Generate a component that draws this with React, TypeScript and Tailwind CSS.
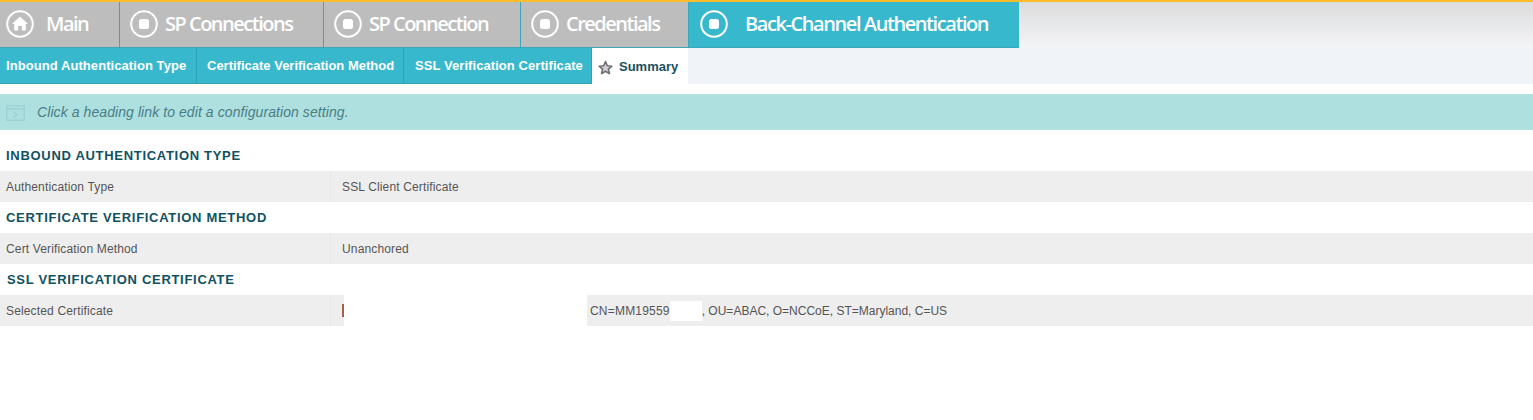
import React from "react";

const mainTabs = [
  { label: "Main", width: "w-[120px]", home: true },
  { label: "SP Connections", width: "w-[204px]" },
  { label: "SP Connection", width: "w-[197px]" },
  { label: "Credentials", width: "w-[168px]" },
];

const subTabs = [
  { label: "Inbound Authentication Type", width: "w-[197px]", pad: "pl-[6px] tracking-[0.07px]" },
  { label: "Certificate Verification Method", width: "w-[207px]", pad: "pl-[10px] tracking-[0px]" },
  { label: "SSL Verification Certificate", width: "w-[188px]", pad: "pl-[11px] tracking-[0.07px]" },
];

const TabIcon = ({ home }: { home?: boolean }) => (
  <svg width="30" height="30" viewBox="0 0 30 30" className="shrink-0">
    <circle cx="15" cy="15" r="12.8" fill="none" stroke="white" strokeWidth="2" />
    {home ? (
      <path d="M15 7.5 L23 15 H20.8 V21.5 H16.8 V17 H13.2 V21.5 H9.2 V15 H7 Z" fill="white" />
    ) : (
      <rect x="10" y="10" width="10" height="10" rx="2.5" fill="white" />
    )}
  </svg>
);

const Heading = ({ children, className }: { children: React.ReactNode; className?: string }) => (
  <div className={`h-[31px] flex items-center text-[13px] font-bold tracking-[0.7px] text-[#0f5163] uppercase ${className ?? "pl-[6px]"}`}>
    {children}
  </div>
);

const Row = ({ label, value }: { label: string; value: string }) => (
  <div className="h-[31px] flex bg-[#eeeeee] text-[12px] tracking-[0.15px] text-[#555555]">
    <div className="w-[331px] pl-[6px] flex items-center border-r border-[#e6e6e6]">{label}</div>
    <div className="pl-[11px] flex items-center">{value}</div>
  </div>
);

export default function App() {
  return (
    <div className="w-[1533px] h-[420px] bg-white overflow-hidden font-['Liberation_Sans',Arial,sans-serif]">
      <div className="h-[2px] bg-[#fdbc2c]" />

      <div className="h-[46px] flex bg-gradient-to-b from-[#dcdcdc] to-[#f4f5f8]">
        {mainTabs.map((tab) => (
          <div
            key={tab.label}
            className={`${tab.width} h-full flex items-center bg-[#bdbdbd] border-r border-b border-[#3ba6b8] pb-[2px] font-['Open_Sans',sans-serif] text-[20px] font-semibold tracking-[-1.5px] text-white ${tab.home ? "pl-[5px]" : "pl-[9px]"}`}
          >
            <TabIcon home={tab.home} />
            <span className={tab.home ? "ml-[11px]" : "ml-[6px]"}>{tab.label}</span>
          </div>
        ))}
        <div className="w-[330px] h-full flex items-center bg-[#38b8cc] border-b border-[#3ba6b8] pl-[10px] pb-[2px] font-['Open_Sans',sans-serif] text-[20px] font-semibold tracking-[-1.42px] text-white">
          <TabIcon />
          <span className="ml-[16px]">Back-Channel Authentication</span>
        </div>
      </div>

      <div className="h-[36px] flex bg-[#f0f3f8]">
        {subTabs.map((tab) => (
          <div
            key={tab.label}
            className={`${tab.width} ${tab.pad} h-full flex items-center bg-[#38b8cc] border-r border-b border-[#2ea3b6] text-[13px] font-bold text-white`}
          >
            {tab.label}
          </div>
        ))}
        <div className="w-[96px] h-full flex items-center bg-white pl-[6px] pt-[1px] text-[13px] font-bold text-[#1c4f60]">
          <svg width="15" height="15" viewBox="0 0 24 24" className="mr-[6px] mt-[2px] shrink-0">
            <path
              d="M12 2.5 L14.9 9.2 L22.2 9.9 L16.7 14.7 L18.3 21.8 L12 18.1 L5.7 21.8 L7.3 14.7 L1.8 9.9 L9.1 9.2 Z"
              fill="#d0d0d4"
              stroke="#6f6f78"
              strokeWidth="2.6"
              strokeLinejoin="round"
            />
          </svg>
          Summary
        </div>
      </div>

      <div className="h-[36px] mt-[10px] flex items-center bg-[#aee0e0] pl-[6px] text-[14px] italic tracking-[0.08px] text-[#4a7d86]">
        <svg width="19" height="16" viewBox="0 0 19 16" className="mr-[12px] mt-[2px] shrink-0">
          <rect x="0.75" y="0.75" width="17.5" height="14.5" fill="none" stroke="#9bd3d6" strokeWidth="1.5" />
          <path d="M1 4 H18" stroke="#9bd3d6" strokeWidth="1.5" />
          <path d="M7 6.5 L11 9.5 L7 12.5" fill="none" stroke="#9bd3d6" strokeWidth="1.5" />
        </svg>
        Click a heading link to edit a configuration setting.
      </div>

      <div className="pt-[10px]">
        <Heading>Inbound Authentication Type</Heading>
        <Row label="Authentication Type" value="SSL Client Certificate" />
        <Heading>Certificate Verification Method</Heading>
        <Row label="Cert Verification Method" value="Unanchored" />
        <Heading className="pl-[7px]">SSL Verification Certificate</Heading>
        <div className="h-[31px] flex text-[12px] text-[#555555]">
          <div className="w-[331px] pl-[6px] flex items-center bg-[#eeeeee] border-r border-[#e6e6e6] tracking-[0.15px]">
            Selected Certificate
          </div>
          <div className="w-[13px] pl-[11px] flex items-center bg-[#eeeeee]">
            <span className="w-[2px] h-[13px] bg-[#a0604c]" />
          </div>
          <div className="w-[243px]" />
          <div className="flex-1 flex items-center bg-[#eeeeee] pl-[3px]">
            <span className="tracking-[0.2px]">CN=MM19559</span>
            <span className="w-[32px] h-[20px] bg-white" />
            <span>, OU=ABAC, O=NCCoE, ST=Maryland, C=US</span>
          </div>
        </div>
      </div>
    </div>
  );
}
